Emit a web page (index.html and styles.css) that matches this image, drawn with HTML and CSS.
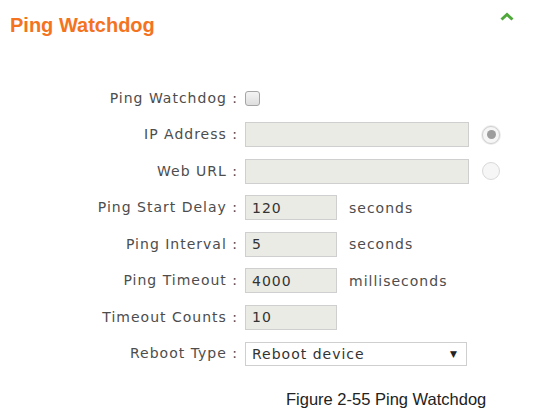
FILE: index.html
```html
<!DOCTYPE html>
<html lang="en">
<head>
  <meta charset="UTF-8" />
  <title>Ping Watchdog</title>
  <link rel="stylesheet" href="styles.css">
</head>
<body>

  <header class="panel-head">
    <h1>Ping Watchdog</h1>
    <span class="collapse-btn">
      <svg width="14" height="9" viewBox="0 0 14 9"><path d="M1.5 7.5 L7 2.5 L12.5 7.5" fill="none" stroke="#4fa83a" stroke-width="3"/></svg>
    </span>
  </header>

  <main class="form">
    <label class="lbl">Ping Watchdog :</label>
    <div class="ctl"><span class="checkbox"></span></div>

    <label class="lbl">IP Address :</label>
    <div class="ctl"><input type="text" class="field wide" /><span class="radio on"></span></div>

    <label class="lbl">Web URL :</label>
    <div class="ctl"><input type="text" class="field wide" /><span class="radio"></span></div>

    <label class="lbl">Ping Start Delay :</label>
    <div class="ctl"><input type="text" class="field short" value="120" /><span class="unit">seconds</span></div>

    <label class="lbl">Ping Interval :</label>
    <div class="ctl"><input type="text" class="field short" value="5" /><span class="unit">seconds</span></div>

    <label class="lbl">Ping Timeout :</label>
    <div class="ctl"><input type="text" class="field short" value="4000" /><span class="unit">milliseconds</span></div>

    <label class="lbl">Timeout Counts :</label>
    <div class="ctl"><input type="text" class="field short" value="10" /></div>

    <label class="lbl">Reboot Type :</label>
    <div class="ctl">
      <div class="select">
        <span>Reboot device</span>
        <span class="arrow">&#9660;</span>
      </div>
    </div>
  </main>

  <p class="caption">Figure 2-55 Ping Watchdog</p>

</body>
</html>
```

FILE: styles.css
```css
body {
  margin: 0;
  background: #fff;
  font-family: "DejaVu Sans", Verdana, sans-serif;
  color: #4d4d4d;
}
.panel-head {
  display: flex;
  justify-content: space-between;
  align-items: flex-start;
  padding: 0 40px 0 10px;
}
.panel-head h1 {
  margin: 13px 0 0;
  font-family: "Liberation Sans", Arial, sans-serif;
  font-size: 20px;
  line-height: 24px;
  font-weight: bold;
  color: #f4731f;
}
.collapse-btn {
  margin-top: 6px;
  display: block;
  height: 9px;
}
.form {
  display: grid;
  grid-template-columns: 237px auto;
  grid-auto-rows: 25px;
  column-gap: 8px;
  row-gap: 11.5px;
  margin-top: 48.5px;
  font-size: 14px;
  letter-spacing: 1px;
}
.lbl {
  text-align: right;
  line-height: 25px;
  white-space: nowrap;
  margin-right: -1px;
}
.ctl {
  display: flex;
  align-items: center;
}
.checkbox {
  width: 13px;
  height: 13px;
  border: 1px solid #a5a5a5;
  border-radius: 3px;
  background: linear-gradient(#f4f4f4, #dedede);
}
.field {
  box-sizing: border-box;
  height: 25px;
  border: 1px solid #cfcfcf;
  background: #ebebe6;
  padding: 0 6px;
  font-family: "DejaVu Sans", Verdana, sans-serif;
  font-size: 14px;
  letter-spacing: 1px;
  color: #333;
  outline: none;
}
.wide {
  width: 224px;
}
.short {
  width: 92px;
}
.unit {
  margin-left: 12px;
}
.radio {
  box-sizing: border-box;
  width: 18px;
  height: 18px;
  margin-left: 13px;
  border-radius: 50%;
  border: 1px solid #d9d9d9;
  background: #f6f6f6;
  display: flex;
  align-items: center;
  justify-content: center;
}
.radio.on {
  border-color: #d0d0d0;
  box-shadow: 0 0 0 1px #ededed;
}
.radio.on::after {
  content: "";
  width: 9px;
  height: 9px;
  border-radius: 50%;
  background: #9d9d9d;
}
.select {
  box-sizing: border-box;
  width: 222px;
  height: 24px;
  border: 1px solid #cfcfcf;
  background: #fff;
  display: flex;
  align-items: center;
  justify-content: space-between;
  padding: 0 9px 0 6px;
  color: #333;
}
.arrow {
  font-size: 9px;
  letter-spacing: 0;
  color: #222;
}
.caption {
  margin: 24px 0 0 286px;
  font-family: "Liberation Sans", Arial, sans-serif;
  font-size: 16.5px;
  color: #222;
}
```
